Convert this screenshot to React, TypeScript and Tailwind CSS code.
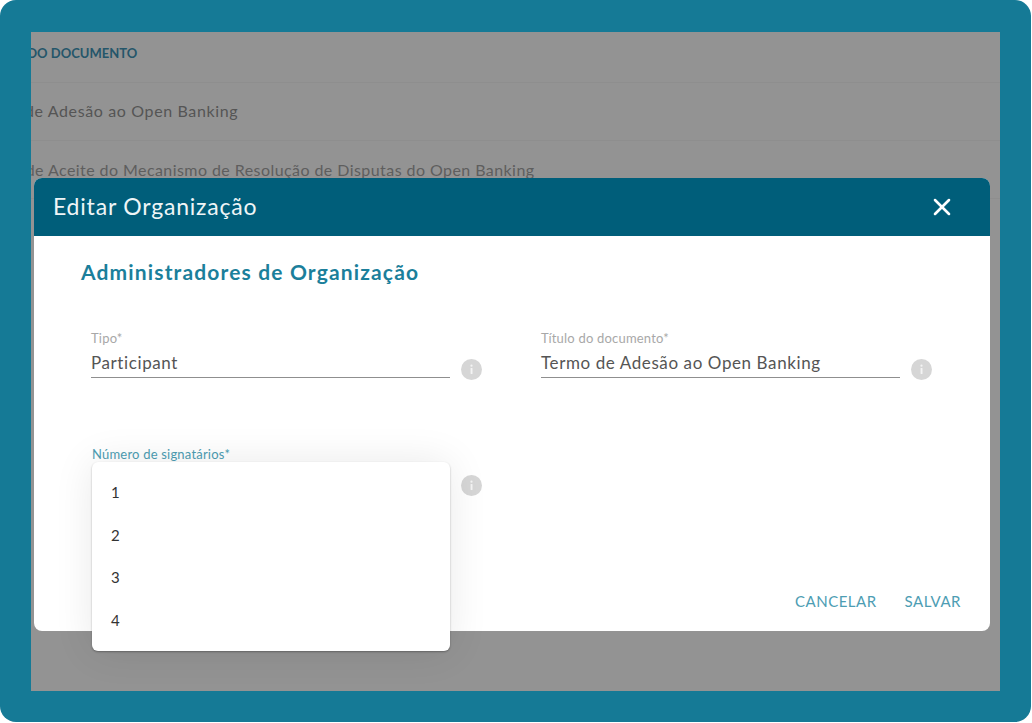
import React from 'react';
import { X } from 'lucide-react';

const font = "font-['Lato','Noto_Sans',sans-serif]";

function InfoDot() {
  return (
    <svg width="21" height="21" viewBox="0 0 21 21" className="shrink-0">
      <circle cx="10.5" cy="10.5" r="10.5" fill="#d6d6d6" />
      <rect x="9.6" y="9" width="1.9" height="6" rx="0.6" fill="#f4f4f4" />
      <circle cx="10.5" cy="6.7" r="1.1" fill="#f4f4f4" />
    </svg>
  );
}

function Field({ label, value }: { label: string; value: string }) {
  return (
    <div className="flex items-end">
      <div className="w-[359px]">
        <div className="text-[13px] leading-[14px] tracking-[0.2px] text-[#a8a8a8]">{label}</div>
        <div className="mt-[6px] h-[27px] border-b border-[#8f8f8f] text-[17px] leading-[24px] tracking-[0.6px] text-[#555555]">
          {value}
        </div>
      </div>
      <div className="ml-[11px] -mb-[2px]">
        <InfoDot />
      </div>
    </div>
  );
}

export default function App() {
  const options = ['1', '2', '3', '4'];

  return (
    <div className={`${font} h-[723px] w-[1032px] overflow-hidden bg-white`}>
      <div className="h-[722px] w-[1031px] rounded-[16px] bg-[#157a96] pl-[31px] pr-[31px] pt-[32px]">
        <div className="relative h-[659px] w-[969px] bg-[#939393]">
          {/* table behind the dialog */}
          <div className="h-full overflow-hidden">
            <div className="flex h-[51px] items-center border-b border-[#8e8e8e] pb-[16px] pt-[10px]">
              <span className="-ml-[53px] whitespace-nowrap text-[13px] font-bold text-[#25566a]">
                TÍTULO DO DOCUMENTO
              </span>
            </div>
            <div className="flex h-[58px] items-center border-b border-[#8e8e8e] pb-[2px]">
              <span className="-ml-[58px] whitespace-nowrap text-[16px] tracking-[0.63px] text-[#555555]">
                Termo de Adesão ao Open Banking
              </span>
            </div>
            <div className="flex h-[58px] items-center border-b border-[#8e8e8e]">
              <span className="-ml-[56px] whitespace-nowrap text-[16px] tracking-[0.43px] text-[#5e5e5e]">
                Termo de Aceite do Mecanismo de Resolução de Disputas do Open Banking
              </span>
            </div>
          </div>

          {/* dialog */}
          <div className="absolute left-[3px] top-[146px] h-[453px] w-[956px] rounded-[8px] bg-white">
            <div className="flex h-[58px] items-center justify-between rounded-t-[8px] bg-[#005e7a] pl-[19px] pr-[34px]">
              <span className="-mt-[2px] text-[23px] tracking-[0.8px] text-[#eef5f7]">Editar Organização</span>
              <X size={28} strokeWidth={2.2} className="text-white" />
            </div>

            <div className="relative pl-[47px] pt-[22px]">
              <h2 className="text-[21px] font-bold leading-[28px] tracking-[1.15px] text-[#1b7f9b]">
                Administradores de Organização
              </h2>

              <div className="mt-[45px] grid grid-cols-[450px_1fr] pl-[10px]">
                <Field label="Tipo*" value="Participant" />
                <Field label="Título do documento*" value="Termo de Adesão ao Open Banking" />
              </div>

              <div className="relative mt-[69px] flex pl-[11px]">
                <div className="w-[358px]">
                  <div className="text-[13px] leading-[14px] tracking-[0.2px] text-[#4d9db3]">Número de signatários*</div>
                  <div className="absolute left-[11px] top-[15px] z-10 flex h-[189px] w-[358px] flex-col rounded-[6px] bg-white pt-[9px] shadow-[0_0_40px_rgba(0,0,0,0.09),0_1px_2px_rgba(0,0,0,0.3)]">
                    {options.map((n) => (
                      <div key={n} className="flex h-[42.6px] items-center pl-[19px] text-[15px] text-[#333333]">
                        {n}
                      </div>
                    ))}
                  </div>
                </div>
                <div className="ml-[11px] mt-[28px]">
                  <InfoDot />
                </div>
              </div>
            </div>

            <div className="absolute bottom-[19px] right-[29px] flex gap-[28px] text-[15px] tracking-[0.5px] text-[#4d9db3]">
              <span>CANCELAR</span>
              <span>SALVAR</span>
            </div>
          </div>
        </div>
      </div>
    </div>
  );
}
